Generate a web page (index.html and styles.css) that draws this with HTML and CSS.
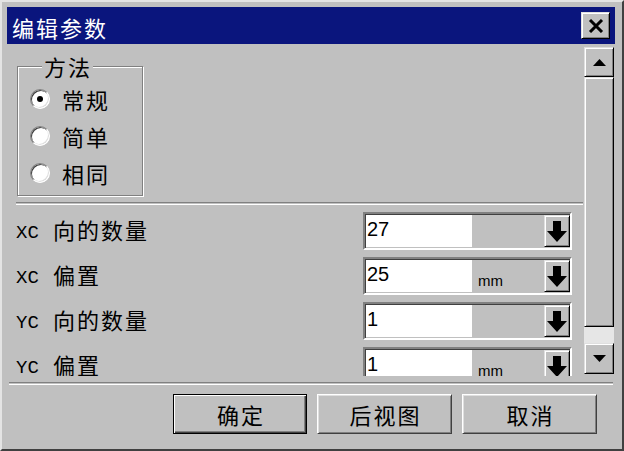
FILE: index.html
```html
<!DOCTYPE html>
<html lang="zh">
<head>
<meta charset="utf-8">
<title>编辑参数</title>
<link rel="stylesheet" href="styles.css">
</head>
<body>
<div class="window">
  <div class="titlebar">
    <span class="title">编辑参数</span>
    <div class="close raised">
      <svg width="16" height="14" viewBox="0 0 16 14"><path d="M2 1 L14 13 M14 1 L2 13" stroke="#000" stroke-width="3" fill="none"/></svg>
    </div>
  </div>
  <div class="main">
    <div class="scroll">
      <fieldset class="group">
        <legend>方法</legend>
        <div class="radio-row"><span class="radio on"><span class="dot"></span></span><span class="rlabel">常规</span></div>
        <div class="radio-row"><span class="radio"></span><span class="rlabel">简单</span></div>
        <div class="radio-row"><span class="radio"></span><span class="rlabel">相同</span></div>
      </fieldset>
      <div class="sep"></div>
      <div class="row">
        <div class="label"><span class="axis">XC</span><span class="cjk">向的数量</span></div>
        <div class="field"><div class="val">27</div><div class="unit"></div><div class="drop raised"><svg width="20" height="22" viewBox="0 0 20 22"><path d="M6 0 H14 V10 H20 L10 21 L0 10 H6 Z" fill="#000"/></svg></div></div>
      </div>
      <div class="row">
        <div class="label"><span class="axis">XC</span><span class="cjk">偏置</span></div>
        <div class="field"><div class="val">25</div><div class="unit">mm</div><div class="drop raised"><svg width="20" height="22" viewBox="0 0 20 22"><path d="M6 0 H14 V10 H20 L10 21 L0 10 H6 Z" fill="#000"/></svg></div></div>
      </div>
      <div class="row">
        <div class="label"><span class="axis">YC</span><span class="cjk">向的数量</span></div>
        <div class="field"><div class="val">1</div><div class="unit"></div><div class="drop raised"><svg width="20" height="22" viewBox="0 0 20 22"><path d="M6 0 H14 V10 H20 L10 21 L0 10 H6 Z" fill="#000"/></svg></div></div>
      </div>
      <div class="row">
        <div class="label"><span class="axis">YC</span><span class="cjk">偏置</span></div>
        <div class="field"><div class="val">1</div><div class="unit">mm</div><div class="drop raised"><svg width="20" height="22" viewBox="0 0 20 22"><path d="M6 0 H14 V10 H20 L10 21 L0 10 H6 Z" fill="#000"/></svg></div></div>
      </div>
    </div>
    <div class="scrollbar">
      <div class="sb-btn raised"><svg width="13" height="7" viewBox="0 0 13 7"><path d="M6.5 0 L13 7 H0 Z" fill="#000"/></svg></div>
      <div class="thumb raised"></div>
      <div class="track"></div>
      <div class="sb-btn down raised"><svg width="13" height="7" viewBox="0 0 13 7"><path d="M0 0 H13 L6.5 7 Z" fill="#000"/></svg></div>
    </div>
  </div>
  <div class="sep bottom"></div>
  <div class="buttons">
    <div class="btn default">确定</div>
    <div class="btn">后视图</div>
    <div class="btn">取消</div>
  </div>
</div>
</body>
</html>
```

FILE: styles.css
```css
html, body {
  margin: 0;
  padding: 0;
  background: #c0c0c0;
}
body {
  font-family: "Noto Sans CJK SC", "Liberation Sans", sans-serif;
  color: #000;
}
.window {
  width: 624px;
  height: 451px;
  box-sizing: border-box;
  background: #c0c0c0;
  border: 2px solid;
  border-color: #e4e4e4 #404040 #404040 #e4e4e4;
  padding: 5px 7px 0 5px;
  display: flex;
  flex-direction: column;
  overflow: hidden;
}
.titlebar {
  height: 37px;
  flex: none;
  background: #0a157d;
  display: flex;
  align-items: center;
  justify-content: space-between;
  padding: 0 5px 0 5px;
}
.title {
  color: #fff;
  font-size: 22px;
  letter-spacing: 2px;
  line-height: 24px;
  padding-top: 3px;
}
.raised {
  box-sizing: border-box;
  background: #c0c0c0;
  border: 1px solid;
  border-color: #dfdfdf #000 #000 #dfdfdf;
  box-shadow: inset 1px 1px #fff, inset -1px -1px #808080;
}
.close {
  width: 29px;
  height: 27px;
  display: flex;
  align-items: center;
  justify-content: center;
}
.main {
  display: flex;
  height: 332px;
  flex: none;
}
.scroll {
  flex: 1;
  overflow: hidden;
  padding-left: 9px;
  display: flex;
  flex-direction: column;
}
.group {
  margin: 10px 0 0 1px;
  width: 126px;
  box-sizing: border-box;
  padding: 2px 0 4px 12px;
  border: 1px solid #808080;
  box-shadow: inset 1px 1px #fff, 1px 1px #fff;
  flex: none;
}
.group legend {
  font-size: 22px;
  line-height: 24px;
  letter-spacing: 2px;
  padding: 0 1px 0 2px;
  margin-left: 12px;
  background: #c0c0c0;
}
.radio-row {
  height: 37px;
  display: flex;
  align-items: center;
}
.radio {
  width: 20px;
  height: 20px;
  box-sizing: border-box;
  border-radius: 50%;
  border: 1px solid;
  border-color: #808080 #fff #fff #808080;
  box-shadow: inset 1px 1px #404040, inset -1px -1px #dfdfdf;
  background: #fff;
  display: flex;
  align-items: center;
  justify-content: center;
  flex: none;
}
.dot {
  width: 6px;
  height: 6px;
  border-radius: 50%;
  background: #000;
}
.rlabel {
  margin-left: 12px;
  font-size: 22px;
  letter-spacing: 2px;
  line-height: 24px;
}
.sep {
  height: 1px;
  border-top: 1px solid #808080;
  border-bottom: 1px solid #fff;
  flex: none;
}
.scroll .sep {
  margin-top: 6px;
  margin-bottom: 7px;
}
.row {
  height: 38px;
  display: flex;
  align-items: center;
  margin-bottom: 7px;
  flex: none;
  padding-right: 11px;
}
.label {
  flex: 1;
  display: flex;
  align-items: baseline;
}
.axis {
  font-family: "Liberation Mono", monospace;
  font-size: 19px;
  width: 23px;
  margin-right: 14px;
  position: relative;
  top: -1px;
}
.cjk {
  font-size: 22px;
  letter-spacing: 2px;
  line-height: 24px;
}
.field {
  width: 209px;
  height: 38px;
  box-sizing: border-box;
  border: 2px solid;
  border-color: #808080 #fff #fff #808080;
  box-shadow: inset 1px 1px #404040;
  padding: 1px 0 1px 1px;
  display: flex;
  background: #c0c0c0;
}
.val {
  width: 106px;
  background: #fff;
  font-family: "Liberation Sans", sans-serif;
  font-size: 20px;
  line-height: 24px;
  padding: 2px 0 0 1px;
  box-sizing: border-box;
}
.unit {
  flex: 1;
  font-family: "Liberation Sans", sans-serif;
  font-size: 15px;
  padding: 0 0 3px 6px;
  display: flex;
  align-items: flex-end;
}
.drop {
  width: 26px;
  display: flex;
  align-items: center;
  justify-content: center;
}
.drop svg {
  margin-top: 2px;
}
.scrollbar {
  width: 30px;
  margin: 3px 1px 0 1px;
  display: flex;
  flex-direction: column;
  flex: none;
}
.sb-btn {
  height: 30px;
  display: flex;
  align-items: center;
  justify-content: center;
  flex: none;
}
.sb-btn.down {
  height: 31px;
}
.thumb {
  height: 250px;
  flex: none;
}
.track {
  height: 16px;
  background: #e6e6e6;
  flex: none;
}
.sep.bottom {
  margin: 6px 2px 0 2px;
}
.buttons {
  display: flex;
  justify-content: flex-end;
  gap: 10px;
  margin-top: 9px;
  padding-right: 18px;
}
.btn {
  width: 135px;
  height: 40px;
  box-sizing: border-box;
  background: #c0c0c0;
  border: 1px solid;
  border-color: #fff #404040 #404040 #fff;
  box-shadow: inset 1px 1px #dfdfdf, inset -1px -1px #808080;
  display: flex;
  align-items: center;
  justify-content: center;
  font-size: 22px;
  letter-spacing: 2px;
  padding-left: 2px;
}
.btn.default {
  width: 134px;
  border: 1px solid #000;
  box-shadow: inset 1px 1px #fff, inset -1px -1px #404040, inset -2px -2px #808080;
}
```
